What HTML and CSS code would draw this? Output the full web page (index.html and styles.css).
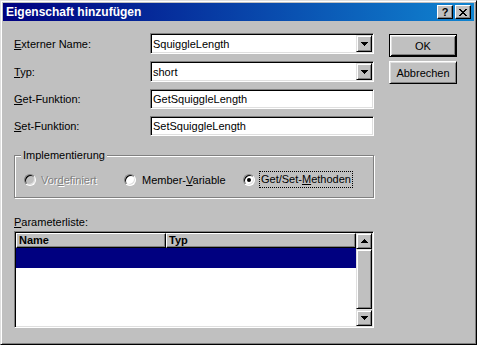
FILE: index.html
```html
<!DOCTYPE html>
<html lang="de">
<head>
    <meta charset="UTF-8">
    <title>Eigenschaft hinzufügen</title>
    <link rel="stylesheet" href="styles.css">
</head>
<body>
    <div class="window">
        <div class="titlebar">
            <span class="title">Eigenschaft hinzufügen</span>
            <div class="caption-buttons">
                <span class="cap-btn help">?</span>
                <span class="cap-btn">
                    <svg width="8" height="7" viewBox="0 0 8 7" shape-rendering="crispEdges">
                        <path d="M0 0h2v1h-2z M6 0h2v1h-2z M1 1h2v1h-2z M5 1h2v1h-2z M2 2h4v1h-4z M3 3h2v1h-2z M2 4h4v1h-4z M1 5h2v1h-2z M5 5h2v1h-2z M0 6h2v1h-2z M6 6h2v1h-2z" fill="#000"/>
                    </svg>
                </span>
            </div>
        </div>

        <div class="client">
            <div class="form">
                <div class="row">
                    <span class="label"><u>E</u>xterner Name:</span>
                    <div class="combo">
                        <span class="field-text">SquiggleLength</span>
                        <span class="drop">
                            <svg width="7" height="4" viewBox="0 0 7 4" shape-rendering="crispEdges"><path d="M0 0h7v1h-7z M1 1h5v1h-5z M2 2h3v1h-3z M3 3h1v1h-1z" fill="#000"/></svg>
                        </span>
                    </div>
                </div>
                <div class="row">
                    <span class="label"><u>T</u>yp:</span>
                    <div class="combo">
                        <span class="field-text">short</span>
                        <span class="drop">
                            <svg width="7" height="4" viewBox="0 0 7 4" shape-rendering="crispEdges"><path d="M0 0h7v1h-7z M1 1h5v1h-5z M2 2h3v1h-3z M3 3h1v1h-1z" fill="#000"/></svg>
                        </span>
                    </div>
                </div>
                <div class="row">
                    <span class="label"><u>G</u>et-Funktion:</span>
                    <div class="edit"><span class="field-text">GetSquiggleLength</span></div>
                </div>
                <div class="row">
                    <span class="label"><u>S</u>et-Funktion:</span>
                    <div class="edit"><span class="field-text">SetSquiggleLength</span></div>
                </div>

                <div class="group">
                    <span class="group-title">Implementierung</span>
                    <span class="radio-item first disabled"><span class="radio"></span><span>Vor<u>d</u>efiniert</span></span>
                    <span class="radio-item second"><span class="radio"></span><span>Member-<u>V</u>ariable</span></span>
                    <span class="radio-item"><span class="radio checked"></span><span class="focus">Get/Set-<u>M</u>ethoden</span></span>
                </div>

                <div class="list-label"><u>P</u>arameterliste:</div>
                <div class="list">
                    <div class="list-main">
                        <div class="header">
                            <span class="col col-name">Name</span>
                            <span class="col col-type">Typ</span>
                        </div>
                        <div class="selected"></div>
                    </div>
                    <div class="scrollbar">
                        <span class="sb-btn">
                            <svg width="7" height="4" viewBox="0 0 7 4" shape-rendering="crispEdges"><path d="M3 0h1v1h-1z M2 1h3v1h-3z M1 2h5v1h-5z M0 3h7v1h-7z" fill="#000"/></svg>
                        </span>
                        <span class="sb-thumb"></span>
                        <span class="sb-track"></span>
                        <span class="sb-btn">
                            <svg width="7" height="4" viewBox="0 0 7 4" shape-rendering="crispEdges"><path d="M0 0h7v1h-7z M1 1h5v1h-5z M2 2h3v1h-3z M3 3h1v1h-1z" fill="#000"/></svg>
                        </span>
                    </div>
                </div>
            </div>

            <div class="buttons">
                <button class="btn default">OK</button>
                <button class="btn">Abbrechen</button>
            </div>
        </div>
    </div>
</body>
</html>
```

FILE: styles.css
```css
* { box-sizing: border-box; }
body {
    margin: 0;
    font-family: "Liberation Sans", Arial, sans-serif;
    font-size: 11px;
    color: #000;
    background: #c0c0c0;
}
.window {
    width: 477px;
    height: 345px;
    background: #c0c0c0;
    border: 1px solid;
    border-color: #dfdfdf #000 #000 #dfdfdf;
    box-shadow: inset 1px 1px #fff, inset -1px -1px #808080;
    padding: 2px;
}
.titlebar {
    height: 18px;
    display: flex;
    align-items: center;
    padding: 0 3px 0 3px;
    background: linear-gradient(to right, #000080, #1084d0);
}
.title {
    flex: 1;
    color: #fff;
    font-weight: bold;
    font-size: 12px;
}
.caption-buttons {
    display: flex;
    gap: 2px;
}
.cap-btn {
    width: 16px;
    height: 14px;
    display: flex;
    align-items: center;
    justify-content: center;
    background: #c0c0c0;
    border: 1px solid;
    border-color: #fff #000 #000 #fff;
    box-shadow: inset -1px -1px #808080;
}
.help {
    font-weight: bold;
    font-size: 11px;
    line-height: 12px;
}
.client {
    display: flex;
    padding: 12px 0 0 11px;
}
.form {
    width: 360px;
    display: flex;
    flex-direction: column;
}
.row {
    display: flex;
    align-items: center;
    margin-bottom: 7px;
}
.label {
    width: 136px;
}
.combo, .edit {
    width: 224px;
    height: 21px;
    display: flex;
    align-items: center;
    padding: 1px;
    background: #fff;
    border: 1px solid;
    border-color: #808080 #fff #fff #808080;
    box-shadow: inset 1px 1px #000, inset -1px -1px #dfdfdf;
}
.edit {
    height: 20px;
}
.field-text {
    flex: 1;
    padding-left: 1px;
}
.drop {
    width: 16px;
    height: 17px;
    display: flex;
    align-items: center;
    justify-content: center;
    background: #c0c0c0;
    border: 1px solid;
    border-color: #dfdfdf #000 #000 #dfdfdf;
    box-shadow: inset 1px 1px #fff, inset -1px -1px #808080;
}
.group {
    position: relative;
    height: 43px;
    margin-top: 12px;
    display: flex;
    align-items: center;
    padding: 6px 0 0 9px;
    border: 1px solid #808080;
    box-shadow: inset 1px 1px #fff, 1px 1px #fff;
}
.group-title {
    position: absolute;
    top: -7px;
    left: 6px;
    padding: 0 2px;
    line-height: 13px;
    background: #c0c0c0;
}
.radio-item {
    display: flex;
    align-items: center;
}
.radio-item.first { width: 100px; }
.radio-item.second { width: 119px; }
.radio {
    width: 12px;
    height: 12px;
    margin-right: 5px;
    border-radius: 50%;
    display: flex;
    align-items: center;
    justify-content: center;
    background: #fff;
    border: 1px solid;
    border-color: #808080 #fff #fff #808080;
    box-shadow: inset 1px 1px #000, inset -1px -1px #dfdfdf;
}
.second .radio { margin-right: 6px; }
.radio.checked { margin-right: 4px; }
.radio.checked::after {
    content: "";
    width: 4px;
    height: 4px;
    border-radius: 50%;
    background: #000;
}
.disabled { color: #808080; text-shadow: 1px 1px #fff; }
.disabled .radio { background: #c0c0c0; }
.focus {
    border: 1px dotted #000;
    padding: 0 1px;
    line-height: 15px;
}
.list-label {
    margin-top: 18px;
    line-height: 13px;
}
.list {
    margin-top: 2px;
    height: 97px;
    display: flex;
    padding: 1px;
    background: #fff;
    border: 1px solid;
    border-color: #808080 #fff #fff #808080;
    box-shadow: inset 1px 1px #000, inset -1px -1px #dfdfdf;
}
.list-main {
    flex: 1;
    display: flex;
    flex-direction: column;
}
.header {
    display: flex;
    height: 15px;
}
.col {
    height: 15px;
    line-height: 13px;
    font-weight: bold;
    padding-left: 2px;
    background: #c0c0c0;
    border: 1px solid;
    border-color: #fff #000 #000 #fff;
    box-shadow: inset -1px -1px #808080;
}
.col-name { width: 150px; }
.col-type { flex: 1; }
.selected {
    height: 20px;
    background: #000080;
}
.scrollbar {
    width: 16px;
    display: flex;
    flex-direction: column;
}
.sb-btn, .sb-thumb {
    display: flex;
    align-items: center;
    justify-content: center;
    background: #c0c0c0;
    border: 1px solid;
    border-color: #dfdfdf #000 #000 #dfdfdf;
    box-shadow: inset 1px 1px #fff, inset -1px -1px #808080;
}
.sb-btn { height: 16px; }
.sb-thumb { height: 60px; }
.sb-track {
    flex: 1;
    background: #e0e0e0;
}
.buttons {
    margin-left: 15px;
    padding-top: 1px;
    display: flex;
    flex-direction: column;
    gap: 4px;
}
.btn {
    width: 68px;
    height: 23px;
    padding: 0;
    font-family: "Liberation Sans", Arial, sans-serif;
    font-size: 11px;
    color: #000;
    background: #c0c0c0;
    border: 1px solid;
    border-color: #fff #000 #000 #fff;
    box-shadow: inset 1px 1px #dfdfdf, inset -1px -1px #808080;
}
.btn.default {
    border-color: #000;
    box-shadow: inset 1px 1px #fff, inset -1px -1px #000, inset 2px 2px #dfdfdf, inset -2px -2px #808080;
}
```
